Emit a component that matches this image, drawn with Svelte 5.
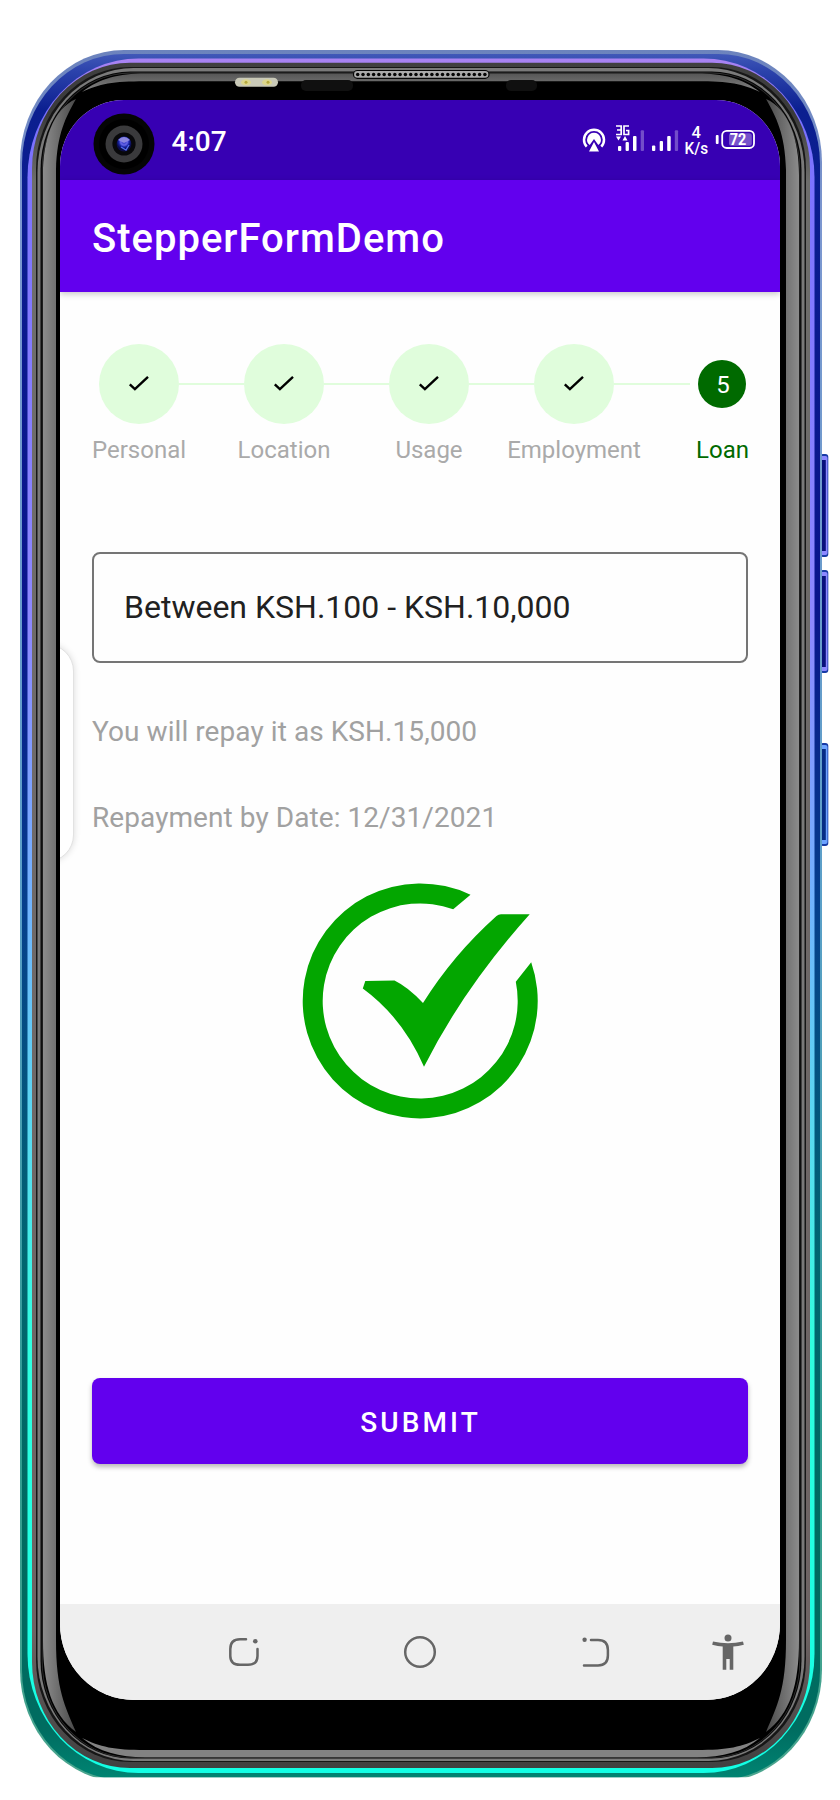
<script>
  const steps = [
    { label: 'Personal', done: true },
    { label: 'Location', done: true },
    { label: 'Usage', done: true },
    { label: 'Employment', done: true },
    { label: 'Loan', done: false }
  ];
  const holes = Array.from({ length: 25 }, (_, i) => 357.7 + i * 5.3);
  const keys = [454, 570, 743];
  // Nested body shells, from the outer edge inwards
  const shells = [
    { l: 20, t: 50, b: 1782, r: 104, fill: 'url(#edge)' },
    { l: 22, t: 54, b: 1780, r: 102, fill: 'url(#body)' },
    { l: 27.5, t: 58.5, b: 1773, r: 111, fill: 'url(#glow)' },
    { l: 32, t: 62.8, b: 1768, r: 98, fill: 'url(#steel)' },
    { l: 36, t: 67, b: 1762, r: 94, fill: '#161616' },
    { l: 37.5, t: 68, b: 1761, r: 96, fill: '#7a7a7a' },
    { l: 40.5, t: 71.5, b: 1758.5, r: 90, fill: '#060606' },
    { l: 41.8, t: 72.6, b: 1757.8, r: 89, fill: '#333' },
    { l: 42.6, t: 73.4, b: 1757.2, r: 88, fill: '#000' }
  ];
</script>

<div class="stage">
  <svg class="frame" width="840" height="1800" viewBox="0 0 840 1800" aria-hidden="true">
    <defs>
      <linearGradient id="edge" gradientUnits="userSpaceOnUse" x1="0" y1="50" x2="0" y2="1780">
        <stop offset="0" stop-color="#6c83bd" /><stop offset=".1" stop-color="#7c97d0" />
        <stop offset=".5" stop-color="#5aa0c8" /><stop offset=".8" stop-color="#2f9c90" /><stop offset="1" stop-color="#4ba58e" />
      </linearGradient>
      <linearGradient id="body" gradientUnits="userSpaceOnUse" x1="0" y1="50" x2="0" y2="1780">
        <stop offset="0" stop-color="#455dbb" /><stop offset=".012" stop-color="#2c43ac" /><stop offset=".035" stop-color="#0b1f90" />
        <stop offset=".32" stop-color="#09148c" /><stop offset=".5" stop-color="#05408c" /><stop offset=".7" stop-color="#006670" />
        <stop offset=".85" stop-color="#006a60" /><stop offset=".97" stop-color="#006c60" /><stop offset="1" stop-color="#008573" />
      </linearGradient>
      <linearGradient id="glow" gradientUnits="userSpaceOnUse" x1="0" y1="58" x2="0" y2="1774">
        <stop offset="0" stop-color="#ab84f2" /><stop offset=".03" stop-color="#7a70ff" /><stop offset=".33" stop-color="#8d88ff" />
        <stop offset=".48" stop-color="#74b0ff" /><stop offset=".65" stop-color="#55e0ee" /><stop offset=".75" stop-color="#30ffdf" /><stop offset="1" stop-color="#12ffe5" />
      </linearGradient>
      <linearGradient id="steel" gradientUnits="userSpaceOnUse" x1="0" y1="62" x2="0" y2="1768">
        <stop offset="0" stop-color="#404040" /><stop offset=".03" stop-color="#3a3a3a" /><stop offset=".07" stop-color="#6e6e6c" />
        <stop offset=".92" stop-color="#6e6464" /><stop offset="1" stop-color="#404040" />
      </linearGradient>
      <linearGradient id="gloss"><stop offset="0" stop-color="#8c8c8c" /><stop offset=".55" stop-color="#686868" /><stop offset="1" stop-color="#484848" /></linearGradient>
      <linearGradient id="glossTop" x1="0" y1="0" x2="0" y2="1"><stop offset="0" stop-color="#565656" /><stop offset="1" stop-color="#858585" /></linearGradient>
      <radialGradient id="lens" cx=".5" cy=".35"><stop offset="0" stop-color="#1b22b8" /><stop offset=".45" stop-color="#6866e8" /><stop offset=".7" stop-color="#1723a6" /><stop offset="1" stop-color="#0a0c48" /></radialGradient>
      <clipPath id="trim"><rect x="0" y="0" width="840" height="1777.3" /></clipPath>
      <g id="sideGloss">
        <path fill="url(#gloss)" d="M43 175 C43 140 53 109 76 99 C66 117 57 133 56 170 L56 1640 C56 1690 65 1706 76 1732 C52 1714 43 1685 43 1640Z" />
      </g>
    </defs>

    {#each keys as y}
      <rect x="820" y={y} width="8.3" height="103" rx="3" fill="#173aa5" />
      <rect x="820" y={y + 2} width="7.5" height="99" rx="2" fill={y > 700 ? '#6da2ff' : '#8c88ff'} />
      <rect x="821" y={y + 6} width="4.8" height="91" fill={y > 700 ? '#062b85' : '#08107c'} />
    {/each}

    <g clip-path="url(#trim)">
      {#each shells as s}
        <rect x={s.l} y={s.t} width={842 - 2 * s.l} height={s.b - s.t} rx={s.r} ry={s.r + 8} fill={s.fill} />
      {/each}
    </g>
    <use href="#sideGloss" />
    <use href="#sideGloss" transform="translate(842 0) scale(-1 1)" />
    <path fill="url(#glossTop)" d="M82 92 C100 78 119 73.5 145 73.5 H697 C723 73.5 742 78 760 92 C743 84 729 81.3 697 81.3 H145 C113 81.3 99 84 82 92Z" />
    <path fill="#828282" d="M82 1738 C99 1752 119 1757.2 145 1757.2 H697 C723 1757.2 743 1752 760 1738 C742 1747 728 1750 697 1750 H145 C114 1750 100 1747 82 1738Z" />

    <rect x="301" y="80" width="52" height="11" rx="5" fill="#101010" />
    <rect x="506" y="80" width="31" height="11" rx="5" fill="#101010" />
    <rect x="353.5" y="70.5" width="135.5" height="7.8" rx="3.9" fill="#aaa" stroke="#060606" stroke-width="1.2" />
    {#each holes as x}<circle cx={x} cy="74.5" r="1.75" fill="#050505" />{/each}
    <rect x="235" y="77.8" width="43" height="9" rx="4.5" fill="#c9c9b8" />
    <ellipse cx="246" cy="82.3" rx="5" ry="3" fill="#dcd68d" /><ellipse cx="267" cy="82.3" rx="5" ry="3" fill="#dcd68d" />
    <circle cx="246" cy="82.3" r="1.5" fill="#b5a83c" /><circle cx="268" cy="82.3" r="1.5" fill="#b5a83c" />
  </svg>

  <main class="screen">
    <header class="status">
      <svg class="camera" width="62" height="62" viewBox="0 0 62 62">
        <circle cx="31" cy="31" r="30.5" fill="#050505" /><circle cx="31" cy="31" r="25" fill="#000" />
        <circle cx="31" cy="31" r="18.5" fill="#3a3a3c" /><circle cx="31" cy="31" r="11.6" fill="#08080a" />
        <circle cx="31" cy="31" r="7.4" fill="url(#lens)" />
        <path d="M25 27 Q31 21 37 27 L31 30Z" fill="#8b86df" /><path d="M28 34 L33 37 L36 32" stroke="#5369ea" stroke-width="1.4" fill="none" />
      </svg>
      <span class="time">4:07</span>
      <svg class="signals" width="176" height="40" viewBox="580 120 176 40">
        <g fill="none" stroke="#fff" stroke-width="2.5">
          <path d="M586.7 146.7 A10 10 0 1 1 601.3 146.7" />
        </g>
        <path fill="#fff" d="M594 132.7a7 7 0 0 1 4.3 12.4L594 139l-4.3 6.1A7 7 0 0 1 594 132.7zM594 142l5 9.5h-10z" />
        <g fill="none" stroke="#fff" stroke-width="1.7"><path d="M616 126h5.2v8.5H616M617 130h4M629 126h-5v8.5h4.6v-4H626" /></g>
        <path fill="#fff" d="M616 136.5h5l-2.5 4zM622.5 140.5h5l-2.5-4.5z" />
        <g fill="#fff">
          <rect x="618" y="146" width="3.3" height="5" rx="1" /><rect x="625.6" y="142" width="3.3" height="9" rx="1" /><rect x="633" y="136" width="3.5" height="15" rx="1" /><rect x="640.7" y="130.3" width="3.3" height="20.7" rx="1" opacity=".3" />
          <rect x="652" y="145.5" width="3.3" height="5.5" rx="1" /><rect x="659.7" y="141" width="3.3" height="10" rx="1" /><rect x="667.2" y="136" width="3.5" height="15" rx="1" /><rect x="674.8" y="130.3" width="3.3" height="20.7" rx="1" opacity=".3" />
        </g>
        <g fill="#fff" font-weight="500">
          <text x="696.2" y="138" font-size="16.5" text-anchor="middle">4</text>
          <text x="696.3" y="154.3" font-size="16.5" text-anchor="middle" textLength="23.5" lengthAdjust="spacingAndGlyphs">K/s</text>
        </g>
        <rect x="715.8" y="135" width="2.8" height="9" rx="1" fill="#fff" />
        <rect x="722.2" y="130.8" width="31.8" height="17.2" rx="4.5" fill="none" stroke="#fff" stroke-width="1.8" />
        <rect x="729" y="133.2" width="22.8" height="12.5" rx="2.5" fill="#fff" opacity=".32" />
        <text x="738" y="145.3" font-size="16.5" font-weight="700" fill="#fff" text-anchor="middle" textLength="16.5" lengthAdjust="spacingAndGlyphs">72</text>
      </svg>
    </header>

    <div class="appbar"><h1>StepperFormDemo</h1></div>

    <section class="content">
      <div class="stepper">
        {#each steps as s, i}
          <div class="step" class:active={!s.done}>
            <div class="dot">
              {#if s.done}
                <svg width="24" height="20" viewBox="0 0 24 20"><path d="M2.8 10.3 L7.9 15.2 L21 2.9" fill="none" stroke="#000" stroke-width="2.4" /></svg>
              {:else}{i + 1}{/if}
            </div>
            <span class="label">{s.label}</span>
          </div>
          {#if i < steps.length - 1}<div class="line" class:last={i === steps.length - 2}></div>{/if}
        {/each}
      </div>

      <div class="field">Between KSH.100 - KSH.10,000</div>
      <p class="repay">You will repay it as KSH.15,000</p>
      <p class="date">Repayment by Date: 12/31/2021</p>

      <svg class="success" width="236" height="236" viewBox="0 0 236 236">
        <g fill="#03a600">
          <path d="M168.5 11.7 A117.5 117.5 0 1 0 229.2 79.3 L213.8 98.8 A97.5 97.5 0 1 1 151.2 26.2Z" />
          <path d="M60.8 105.5 L63.3 98 L92.5 97.5 Q106 104 121 120 Q151 72 194.5 33 Q196.5 31.2 199 31.2 H227.7 Q161 106 122 183.8 Q101 135 60.8 105.5Z" />
        </g>
      </svg>

      <button>SUBMIT</button>
    </section>

    <nav>
      <svg width="720" height="96" viewBox="60 1604 720 96">
        <g fill="none" stroke="#666" stroke-width="2.5" stroke-linecap="round">
          <path d="M246 1639.2 H240 Q230.3 1639.2 230.3 1649 V1656 Q230.3 1664.8 240 1664.8 H248 Q257.5 1664.8 257.5 1656 V1649" />
          <circle cx="420" cy="1652" r="14.8" />
          <path d="M591 1640 H598 Q607.9 1640 607.9 1650 V1655.5 Q607.9 1665.4 598 1665.4 H584" />
        </g>
        <g fill="#666">
          <circle cx="255.3" cy="1641.2" r="2.3" /><circle cx="584.6" cy="1639.8" r="2.2" />
          <circle cx="728" cy="1638" r="3.5" />
          <path d="M713 1641.5 Q728 1645 743 1641.5 L743.8 1644.7 Q738 1646 733.3 1646.6 V1669.7 H729.7 V1659 H726.3 V1669.7 H722.7 V1646.6 Q718 1646 712.2 1644.7Z" />
        </g>
      </svg>
    </nav>
    <div class="handle"></div>
  </main>
</div>

<style>
  :global(body) { background: #fff; }
  .stage { box-sizing: border-box; width: 840px; height: 1800px; padding: 100px 60px; position: relative; overflow: hidden; font-family: Roboto, sans-serif; }
  .frame { position: absolute; left: 0; top: 0; }
  .screen { position: relative; width: 720px; height: 1600px; display: flex; flex-direction: column; overflow: hidden; background: #fefefe; border-radius: 64px 64px 74px 74px / 66px 66px 76px 76px; }
  .status { height: 80px; flex: none; background: #3700b3; display: flex; align-items: center; color: #fff; box-sizing: border-box; padding-left: 32.5px; }
  .camera { margin-top: 7px; flex: none; }
  .time { margin-left: 17px; margin-top: 3px; font-size: 28px; font-weight: 500; line-height: 34px; }
  .signals { margin-left: auto; margin-right: 24px; }
  .appbar { height: 112px; flex: none; background: #6200ee; color: #fff; display: flex; align-items: center; padding-left: 32px; box-shadow: 0 2px 6px rgba(0, 0, 0, .22); position: relative; }
  h1 { margin: 6px 0 0; font-size: 40px; font-weight: 500; line-height: 48px; letter-spacing: 1px; }
  .content { flex: 1; display: flex; flex-direction: column; padding: 52px 32px 0; }
  .stepper { display: flex; align-items: flex-start; height: 130px; padding-left: 7px; }
  .step { width: 80px; flex: none; display: flex; flex-direction: column; align-items: center; color: #aaa; }
  .dot { width: 80px; height: 80px; border-radius: 50%; background: #e0fddc; display: flex; align-items: center; justify-content: center; }
  .step.active { width: 48px; color: #006a00; }
  .active .dot { box-sizing: border-box; width: 48px; height: 48px; margin: 16px 0; padding: 2px 0 0 2px; background: #006a00; color: #fff; font-size: 24px; }
  .label { margin-top: 11px; font-size: 24px; line-height: 30px; white-space: nowrap; }
  .active .label { margin-left: 1px; }
  .line { width: 65px; height: 2px; flex: none; margin-top: 39px; background: #e0fddc; }
  .line.last { width: 76px; margin-right: 8px; }
  .field { box-sizing: border-box; height: 111px; margin-top: 78px; flex: none; border: 2px solid #757575; border-radius: 8px; display: flex; align-items: center; padding: 0 30px 2px; font-size: 32px; color: #212121; }
  p { margin: 0; font-size: 28px; line-height: 34px; color: #a1a1a1; letter-spacing: .07px; }
  .repay { margin-top: 52px; }
  .date { margin-top: 52px; }
  .success { margin: 48px 0 0 210.4px; flex: none; }
  button { margin-top: 259px; height: 86px; flex: none; border: 0; border-radius: 8px; background: #6200ee; color: #fff; font: 500 28px/34px Roboto, sans-serif; letter-spacing: 3.1px; padding: 3px 0 0 1px; box-shadow: 0 3px 5px rgba(0, 0, 0, .28); }
  nav { height: 96px; flex: none; background: #efefef; }
  nav svg { display: block; }
  .handle { position: absolute; left: -40px; top: 544px; width: 54px; height: 218px; box-sizing: border-box; border: 1px solid #e2e2e2; border-radius: 34px; box-shadow: 0 0 7px rgba(0, 0, 0, .14); background: #fff; }
</style>
